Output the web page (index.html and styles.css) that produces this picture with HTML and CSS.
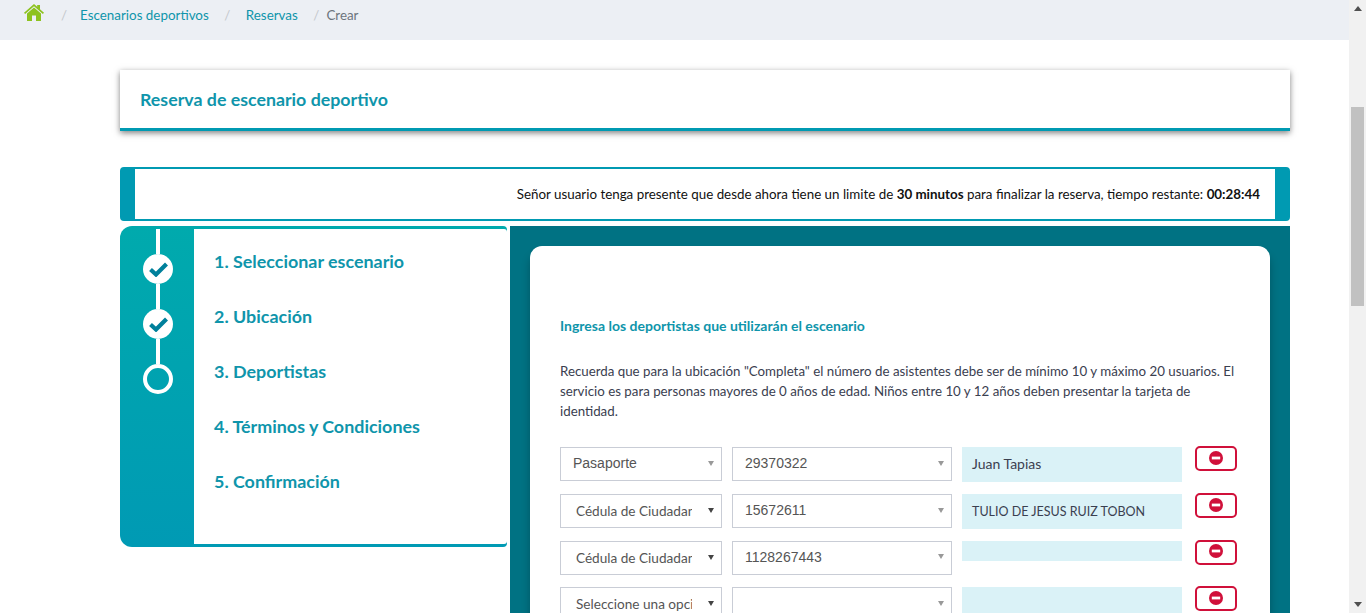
FILE: index.html
```html
<!DOCTYPE html>
<html lang="es">

<head>
  <meta charset="UTF-8">
  <title>Reserva de escenario deportivo</title>
  <link rel="stylesheet" href="styles.css">
</head>

<body>

  <div class="page">

    <!-- Breadcrumb -->
    <nav class="crumbs">
      <a class="crumb-home" href="#">
        <svg width="20" height="17" viewBox="0 0 20 17">
          <path fill="#8dc21f" d="M10 0 L13.2 2.8 V1 H16 V5.2 L20 8.8 L18.9 10 L10 2.3 L1.1 10 L0 8.8 Z" />
          <path fill="#8dc21f" d="M10 3.6 L17 9.6 V17 H12 V11.5 H8 V17 H3 V9.6 Z" />
        </svg>
      </a>
      <span class="crumb-sep crumb-sep-first">/</span>
      <a href="#">Escenarios deportivos</a>
      <span class="crumb-sep">/</span>
      <a href="#">Reservas</a>
      <span class="crumb-sep crumb-sep-last">/</span>
      <span class="crumb-current">Crear</span>
    </nav>

    <main class="content">

      <div class="title-card">
        <h1>Reserva de escenario deportivo</h1>
      </div>

      <div class="notice">
        <p>Señor usuario tenga presente que desde ahora tiene un limite de <b>30 minutos</b> para finalizar la reserva, tiempo restante: <b>00:28:44</b></p>
      </div>

      <div class="wizard">

        <!-- Steps -->
        <div class="steps">
          <div class="rail">
            <span class="rail-line"></span>
            <span class="dot">
              <svg width="19" height="15" viewBox="0 0 19 15"><path fill="none" stroke="#00809b" stroke-width="4.2" d="M1.5 7.5 L7 12.5 L17.5 2" /></svg>
            </span>
            <span class="rail-line"></span>
            <span class="dot">
              <svg width="19" height="15" viewBox="0 0 19 15"><path fill="none" stroke="#00809b" stroke-width="4.2" d="M1.5 7.5 L7 12.5 L17.5 2" /></svg>
            </span>
            <span class="rail-line"></span>
            <span class="dot dot-open"></span>
          </div>
          <ul class="step-list">
            <li>1. Seleccionar escenario</li>
            <li>2. Ubicación</li>
            <li>3. Deportistas</li>
            <li>4. Términos y Condiciones</li>
            <li>5. Confirmación</li>
          </ul>
        </div>

        <!-- Form -->
        <div class="panel">
          <div class="card">
            <h2>Ingresa los deportistas que utilizarán el escenario</h2>
            <p class="help">Recuerda que para la ubicación "Completa" el número de asistentes debe ser de mínimo 10 y máximo 20 usuarios. El servicio es para personas mayores de 0 años de edad. Niños entre 10 y 12 años deben presentar la tarjeta de identidad.</p>

            <div class="rows">

              <div class="row">
                <div class="combo combo-type combo-chosen"><span class="combo-text">Pasaporte</span><span class="arrow arrow-light"></span></div>
                <div class="combo combo-doc"><span class="combo-text">29370322</span><span class="arrow arrow-light"></span></div>
                <div class="name">Juan Tapias</div>
                <button class="remove"><svg width="14" height="14" viewBox="0 0 14 14"><circle cx="7" cy="7" r="7" fill="#d0103a" /><rect x="2.8" y="5.6" width="8.4" height="2.8" fill="#fff" /></svg></button>
              </div>

              <div class="row">
                <div class="combo combo-type"><span class="combo-text">Cédula de Ciudadanía</span><span class="arrow"></span></div>
                <div class="combo combo-doc"><span class="combo-text">15672611</span><span class="arrow arrow-light"></span></div>
                <div class="name name-upper">TULIO DE JESUS RUIZ TOBON</div>
                <button class="remove"><svg width="14" height="14" viewBox="0 0 14 14"><circle cx="7" cy="7" r="7" fill="#d0103a" /><rect x="2.8" y="5.6" width="8.4" height="2.8" fill="#fff" /></svg></button>
              </div>

              <div class="row">
                <div class="combo combo-type"><span class="combo-text">Cédula de Ciudadanía</span><span class="arrow"></span></div>
                <div class="combo combo-doc"><span class="combo-text">1128267443</span><span class="arrow arrow-light"></span></div>
                <div class="name name-empty"></div>
                <button class="remove"><svg width="14" height="14" viewBox="0 0 14 14"><circle cx="7" cy="7" r="7" fill="#d0103a" /><rect x="2.8" y="5.6" width="8.4" height="2.8" fill="#fff" /></svg></button>
              </div>

              <div class="row">
                <div class="combo combo-type"><span class="combo-text">Seleccione una opción</span><span class="arrow"></span></div>
                <div class="combo combo-doc"><span class="combo-text"></span><span class="arrow arrow-light"></span></div>
                <div class="name"></div>
                <button class="remove"><svg width="14" height="14" viewBox="0 0 14 14"><circle cx="7" cy="7" r="7" fill="#d0103a" /><rect x="2.8" y="5.6" width="8.4" height="2.8" fill="#fff" /></svg></button>
              </div>

            </div>
          </div>
        </div>

      </div>
    </main>
  </div>

  <!-- Scrollbar -->
  <div class="scrollbar">
    <span class="scroll-up"></span>
    <span class="scroll-thumb"></span>
    <span class="scroll-down"></span>
  </div>

</body>

</html>
```

FILE: styles.css
```css
html, body {
  height: 613px;
  overflow: hidden;
}

body {
  margin: 0;
  display: flex;
  background-color: #fff;
  font-family: 'Lato', 'Noto Sans', sans-serif;
  color: #3a4050;
}

.page {
  width: 1349px;
  height: 613px;
  overflow: hidden;
}

a {
  color: #0f95ab;
  text-decoration: none;
}

/* Breadcrumb */
.crumbs {
  height: 40px;
  box-sizing: border-box;
  padding: 7px 0 0 24px;
  background-color: #eceff4;
  display: flex;
  align-items: flex-start;
  font-size: 13.4px;
  line-height: 17px;
}

.crumb-home {
  display: block;
  height: 17px;
  margin-top: -3px;
}

.crumb-sep {
  color: #c4c8cc;
  margin: 0 15.5px;
}

.crumb-sep-first {
  margin-left: 17px;
  margin-right: 13px;
}

.crumb-sep-last {
  margin-right: 7px;
}

.crumb-current {
  color: #6c757d;
}

.content {
  width: 1170px;
  margin-left: 120px;
}

/* Title */
.title-card {
  height: 61px;
  box-sizing: border-box;
  margin-top: 30px;
  padding-left: 20px;
  background-color: #fff;
  border-bottom: 3px solid #009ab2;
  box-shadow: 0 2px 6px rgba(0, 0, 0, 0.5);
}

.title-card h1 {
  margin: 0;
  font-size: 17.8px;
  line-height: 58px;
  font-weight: 700;
  color: #0f95ab;
}

/* Time notice */
.notice {
  height: 54px;
  box-sizing: border-box;
  margin-top: 36px;
  padding: 0 15px 0 0;
  background-color: #fff;
  border: solid #009ab2;
  border-width: 2px 15px;
  border-radius: 4px;
}

.notice p {
  margin: 0;
  font-size: 13.36px;
  line-height: 50px;
  text-align: right;
  color: #111;
}

/* Wizard */
.wizard {
  display: flex;
  margin-top: 5px;
}

.steps {
  width: 387px;
  height: 321px;
  margin-right: 3px;
  flex-shrink: 0;
  display: flex;
  background: linear-gradient(180deg, #00aaad, #009ab4);
  border-radius: 12px 4px 4px 12px;
}

.rail {
  width: 74px;
  flex-shrink: 0;
  padding-top: 3px;
  display: flex;
  flex-direction: column;
  align-items: center;
  box-sizing: border-box;
}

.rail-line {
  display: block;
  width: 4px;
  height: 25px;
  margin-left: 2px;
  background-color: #fff;
}

.dot {
  width: 30px;
  height: 30px;
  margin-left: 2px;
  box-sizing: border-box;
  border-radius: 50%;
  background-color: #fff;
  display: flex;
  align-items: center;
  justify-content: center;
}

.dot-open {
  background-color: transparent;
  border: 4px solid #fff;
}

.step-list {
  flex: 1;
  margin: 3px 0;
  padding: 7px 0 0 20px;
  background-color: #fff;
  border-radius: 0 3px 3px 0;
  list-style: none;
  color: #0f95ab;
  font-size: 17.9px;
  font-weight: 700;
}

.step-list li {
  height: 55px;
  line-height: 50px;
}

.panel {
  flex: 1;
  height: 500px;
  padding: 20px;
  box-sizing: border-box;
  background-color: #007283;
}

.card {
  height: 500px;
  box-sizing: border-box;
  padding: 71px 30px 0;
  background-color: #fff;
  border-radius: 12px;
  box-shadow: 0 8px 8px rgba(0, 0, 0, 0.25);
}

.card h2 {
  margin: 0;
  font-size: 14px;
  line-height: 17px;
  font-weight: 700;
  color: #0f95ab;
}

.help {
  margin: 27px 0 0;
  font-size: 13.3px;
  line-height: 20px;
}

/* Rows of athletes */
.rows {
  margin-top: 26.4px;
  display: flex;
  flex-direction: column;
  gap: 12.67px;
}

.row {
  display: flex;
  align-items: flex-start;
  height: 34px;
  gap: 10px;
}

.combo {
  height: 34px;
  box-sizing: border-box;
  display: flex;
  align-items: center;
  background-color: #fff;
  border: 1px solid #c9cdd6;
  font-size: 13.6px;
  color: #555;
}

.combo-type {
  width: 162px;
  padding: 0 0 0 15px;
}

.combo-type .combo-text {
  width: 116px;
  flex: none;
}

.combo-chosen {
  padding: 0 0 2px 12px;
  font-family: 'Liberation Sans', sans-serif;
  font-size: 14px;
}

.combo-doc {
  width: 220px;
  padding: 0 0 2px 12px;
  font-family: 'Liberation Sans', sans-serif;
  font-size: 14px;
}

.combo-text {
  display: block;
  flex: 1;
  overflow: hidden;
  white-space: nowrap;
}

.arrow {
  width: 0;
  height: 0;
  margin: 0 7px 1px auto;
  border-style: solid;
  border-width: 5px 3.5px 0;
  border-color: #444 transparent transparent;
}

.arrow-light {
  border-width: 5px 3px 0;
  border-color: #999 transparent transparent;
  margin: 0 7px 0 auto;
}

.name {
  width: 220px;
  height: 35px;
  box-sizing: border-box;
  padding-left: 10px;
  background-color: #daf2f7;
  font-size: 14px;
  line-height: 34px;
}

.name-upper {
  font-size: 12.5px;
  line-height: 35px;
}

.name-empty {
  height: 20px;
}

.remove {
  width: 42px;
  height: 25px;
  margin: -1px 0 0 3px;
  padding: 0 0 2px;
  box-sizing: border-box;
  display: flex;
  align-items: center;
  justify-content: center;
  background-color: #fff;
  border: 2px solid #d0103a;
  border-radius: 5px;
}

/* Scrollbar */
.scrollbar {
  width: 17px;
  height: 613px;
  flex-shrink: 0;
  box-sizing: border-box;
  padding: 6px 2px;
  background-color: #f1f1f1;
  display: flex;
  flex-direction: column;
  align-items: center;
}

.scroll-up {
  width: 0;
  height: 0;
  border-style: solid;
  border-width: 0 4px 5px;
  border-color: transparent transparent #505050;
}

.scroll-thumb {
  width: 13px;
  height: 199px;
  margin-top: 96px;
  background-color: #c1c1c1;
}

.scroll-down {
  width: 0;
  height: 0;
  margin-top: auto;
  border-style: solid;
  border-width: 5px 4px 0;
  border-color: #505050 transparent transparent;
}
```
